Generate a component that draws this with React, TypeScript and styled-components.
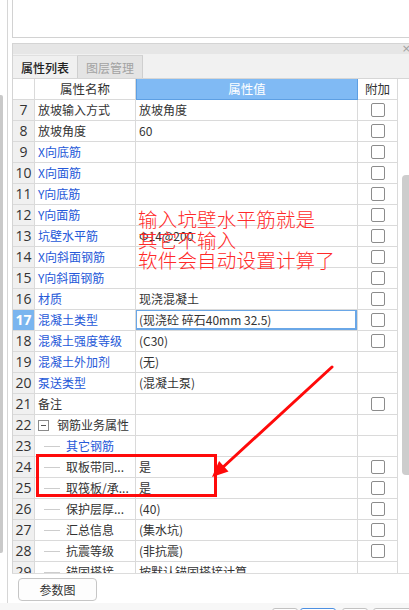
import styled, { createGlobalStyle } from 'styled-components';

const GlobalStyle = createGlobalStyle`
  html, body {
    margin: 0;
    padding: 0;
    background: #f7f7f7;
  }
  body {
    font-family: "Noto Sans CJK SC", "Noto Sans", sans-serif;
    color: #333;
  }
  * {
    box-sizing: border-box;
  }
`;

const Screen = styled.div`
  position: relative;
  width: 409px;
  height: 610px;
  overflow: hidden;
  display: flex;
  flex-direction: column;
  background: #f7f7f7;
`;

const Workspace = styled.div`
  height: 603px;
  flex-shrink: 0;
  display: flex;
`;

const LeftStrip = styled.div`
  width: 7px;
  flex-shrink: 0;
  background: #fff;
`;

const LeftThumb = styled.div`
  width: 3px;
  height: 458px;
  margin-top: 95px;
  background: #c9c9c9;
  border-radius: 0 2px 2px 0;
`;

const Content = styled.div`
  flex: 1;
  min-width: 0;
  display: flex;
  flex-direction: column;
  border-left: 1px solid #d6d6d6;
  padding-left: 4px;
  background: #fff;
`;

const TopBox = styled.div`
  height: 38px;
  flex-shrink: 0;
  margin-right: -10px;
  border-left: 1px solid #d2d2d2;
  border-bottom: 1px solid #d2d2d2;
  background: #fff;
`;

const Panel = styled.div`
  flex: 1;
  margin-top: 5px;
  display: flex;
  flex-direction: column;
  min-height: 0;
`;

const TitleBar = styled.div`
  height: 11px;
  flex-shrink: 0;
  display: flex;
  justify-content: flex-end;
  align-items: center;
  background: #e6e6e6;
  border-top: 1px solid #d4d4d4;
  border-left: 1px solid #d4d4d4;
`;

const CloseMark = styled.span`
  font-family: "DejaVu Sans", sans-serif;
  font-size: 11px;
  line-height: 10px;
  color: #a0a0a0;
  margin-right: -2px;
`;

const TabStrip = styled.div`
  height: 24px;
  flex-shrink: 0;
  display: flex;
  align-items: flex-end;
  background: #f1f1f1;
  border-left: 1px solid #d4d4d4;
`;

const Tab = styled.div<{ $active?: boolean }>`
  width: 65px;
  height: 23px;
  display: flex;
  align-items: center;
  justify-content: center;
  font-size: 12px;
  font-weight: ${(p) => (p.$active ? 500 : 400)};
  color: ${(p) => (p.$active ? '#222' : '#a2a2a2')};
  background: ${(p) => (p.$active ? '#f0f0f0' : '#e4e4e4')};
  border-right: 1px solid #cfcfcf;
  border-top: 1px solid ${(p) => (p.$active ? '#e0e0e0' : '#d4d4d4')};
`;

const GridArea = styled.div`
  height: 496px;
  flex-shrink: 0;
  display: flex;
  border-top: 1px solid #d6d6d6;
  border-bottom: 1px solid #dcdcdc;
`;

const Table = styled.div`
  width: 386px;
  flex-shrink: 0;
  overflow: hidden;
  border-left: 1px solid #d4d4d4;
`;

const VScroll = styled.div`
  flex: 1;
  padding-left: 4px;
  background: #fff;
`;

const VThumb = styled.div`
  width: 10px;
  height: 300px;
  margin-top: 96px;
  background: #cdcdcd;
  border-radius: 4px;
`;

const GridRow = styled.div`
  display: grid;
  grid-template-columns: 22px 101px 222px 40px;
  height: 21px;
`;

const Cell = styled.div`
  display: flex;
  align-items: center;
  min-width: 0;
  overflow: hidden;
  white-space: nowrap;
  border-right: 1px solid #dadada;
  border-bottom: 1px solid #dadada;
  font-size: 12px;
  line-height: 1;
`;

const NumCell = styled(Cell)<{ $selected?: boolean }>`
  justify-content: center;
  font-family: "Open Sans", "Noto Sans", sans-serif;
  font-size: 14px;
  font-weight: ${(p) => (p.$selected ? 700 : 400)};
  color: ${(p) => (p.$selected ? '#fff' : '#333')};
  background: ${(p) => (p.$selected ? '#7ab5ef' : '#f0f0f0')};
`;

const HeadCell = styled(Cell)<{ $accent?: boolean }>`
  justify-content: center;
  font-size: 12.5px;
  color: ${(p) => (p.$accent ? '#fff' : '#333')};
  background: ${(p) => (p.$accent ? '#80baf4' : '#fff')};
  border: ${(p) => (p.$accent ? '1px solid #5d9fe3' : undefined)};
  border-top: none;
`;

const NameCell = styled(Cell)<{ $blue?: boolean }>`
  padding-left: 3px;
  color: ${(p) => (p.$blue ? '#2558d8' : '#333')};
`;

const ValueCell = styled(Cell)<{ $selected?: boolean }>`
  position: relative;
  padding-left: 3px;
  color: #333;

  ${(p) =>
    p.$selected &&
    `
    &::after {
      content: '';
      position: absolute;
      top: -1px;
      left: -1px;
      right: 0;
      bottom: 0;
      border: 2px solid #6aa7e7;
    }
  `}
`;

const AttachCell = styled(Cell)`
  justify-content: center;
`;

const CheckBox = styled.span`
  width: 14px;
  height: 14px;
  border: 1px solid #8c8c8c;
  border-radius: 2px;
  background: #fff;
`;

const MinusBox = styled.span`
  width: 11px;
  height: 11px;
  margin-right: 8px;
  border: 1px solid #8a8a8a;
  display: flex;
  align-items: center;
  justify-content: center;
  background: #fff;

  &::before {
    content: '';
    width: 5px;
    height: 1px;
    background: #555;
  }
`;

const TreeStub = styled.span`
  width: 16px;
  height: 1px;
  margin-left: 6px;
  margin-right: 6px;
  flex-shrink: 0;
  background: #cdcdcd;
`;

const Footer = styled.div`
  flex: 1;
  padding: 4px 0 0 6px;
  background: #fff;
`;

const FooterButton = styled.div`
  width: 79px;
  height: 23px;
  display: flex;
  align-items: center;
  justify-content: center;
  border: 1px solid #c6c6c6;
  border-radius: 4px;
  background: #fdfdfd;
  font-size: 12px;
  color: #333;
`;

const BottomBar = styled.div`
  flex: 1;
  display: flex;
  padding: 5px 0 0 272px;
  background: #f7f7f7;
`;

const BarButton = styled.div<{ $w: number; $gap: number; $primary?: boolean }>`
  width: ${(p) => p.$w}px;
  height: 20px;
  margin-right: ${(p) => p.$gap}px;
  flex-shrink: 0;
  border: 1px solid ${(p) => (p.$primary ? '#4d90e2' : '#c2c2c2')};
  border-radius: 3px;
  background: #fff;
`;

const Note = styled.div`
  position: absolute;
  left: 138px;
  top: 209px;
  font-family: "Noto Sans CJK SC", sans-serif;
  font-size: 19.5px;
  font-weight: 300;
  line-height: 20.5px;
  letter-spacing: 0.2px;
  color: #ff2a2a;
  white-space: nowrap;
  pointer-events: none;
`;

const Highlight = styled.div`
  position: absolute;
  left: 36px;
  top: 454px;
  width: 181px;
  height: 43px;
  border: 3px solid #ff0a0a;
  pointer-events: none;
`;

const Overlay = styled.svg`
  position: absolute;
  left: 0;
  top: 0;
  pointer-events: none;
`;

type Row = {
  n: number;
  name: string;
  value?: string;
  blue?: boolean;
  check?: boolean;
  group?: boolean;
  child?: boolean;
  selected?: boolean;
};

const rows: Row[] = [
  { n: 7, name: '放坡输入方式', value: '放坡角度', check: true },
  { n: 8, name: '放坡角度', value: '60', check: true },
  { n: 9, name: 'X向底筋', blue: true, check: true },
  { n: 10, name: 'X向面筋', blue: true, check: true },
  { n: 11, name: 'Y向底筋', blue: true, check: true },
  { n: 12, name: 'Y向面筋', blue: true, check: true },
  { n: 13, name: '坑壁水平筋', value: 'Φ14@200', blue: true, check: true },
  { n: 14, name: 'X向斜面钢筋', blue: true, check: true },
  { n: 15, name: 'Y向斜面钢筋', blue: true, check: true },
  { n: 16, name: '材质', value: '现浇混凝土', blue: true, check: true },
  { n: 17, name: '混凝土类型', value: '(现浇砼 碎石40mm 32.5)', blue: true, check: true, selected: true },
  { n: 18, name: '混凝土强度等级', value: '(C30)', blue: true, check: true },
  { n: 19, name: '混凝土外加剂', value: '(无)', blue: true },
  { n: 20, name: '泵送类型', value: '(混凝土泵)', blue: true },
  { n: 21, name: '备注', check: true },
  { n: 22, name: '钢筋业务属性', group: true },
  { n: 23, name: '其它钢筋', blue: true, child: true },
  { n: 24, name: '取板带同...', value: '是', check: true, child: true },
  { n: 25, name: '取筏板/承...', value: '是', check: true, child: true },
  { n: 26, name: '保护层厚...', value: '(40)', check: true, child: true },
  { n: 27, name: '汇总信息', value: '(集水坑)', check: true, child: true },
  { n: 28, name: '抗震等级', value: '(非抗震)', check: true, child: true },
  { n: 29, name: '锚固搭接', value: '按默认锚固搭接计算', child: true },
];

function PropertyRow({ row }: { row: Row }) {
  return (
    <GridRow>
      <NumCell $selected={row.selected}>{row.n}</NumCell>
      <NameCell $blue={row.blue}>
        {row.group && <MinusBox />}
        {row.child && <TreeStub />}
        {row.name}
      </NameCell>
      <ValueCell $selected={row.selected}>{row.value}</ValueCell>
      <AttachCell>{row.check && <CheckBox />}</AttachCell>
    </GridRow>
  );
}

export default function App() {
  return (
    <>
      <GlobalStyle />
      <Screen>
        <Workspace>
          <LeftStrip>
            <LeftThumb />
          </LeftStrip>
          <Content>
            <TopBox />
            <Panel>
              <TitleBar>
                <CloseMark>×</CloseMark>
              </TitleBar>
              <TabStrip>
                <Tab $active>属性列表</Tab>
                <Tab>图层管理</Tab>
              </TabStrip>
              <GridArea>
                <Table>
                  <GridRow>
                    <HeadCell />
                    <HeadCell>属性名称</HeadCell>
                    <HeadCell $accent>属性值</HeadCell>
                    <HeadCell>附加</HeadCell>
                  </GridRow>
                  {rows.map((r) => (
                    <PropertyRow key={r.n} row={r} />
                  ))}
                </Table>
                <VScroll>
                  <VThumb />
                </VScroll>
              </GridArea>
              <Footer>
                <FooterButton>参数图</FooterButton>
              </Footer>
            </Panel>
          </Content>
        </Workspace>
        <BottomBar>
          <BarButton $w={26} $gap={2} />
          <BarButton $w={36} $gap={6} $primary />
          <BarButton $w={26} $gap={5} />
          <BarButton $w={44} $gap={0} />
        </BottomBar>

        <Note>
          输入坑壁水平筋就是
          <br />
          其它不输入
          <br />
          软件会自动设置计算了
        </Note>
        <Highlight />
        <Overlay width="409" height="610" viewBox="0 0 409 610">
          <line x1="332" y1="367" x2="221" y2="469" stroke="#ff0a0a" strokeWidth="3" strokeLinecap="round" />
          <polygon points="212,477 228.5,471.4 219.1,461" fill="#ff0a0a" />
        </Overlay>
      </Screen>
    </>
  );
}
